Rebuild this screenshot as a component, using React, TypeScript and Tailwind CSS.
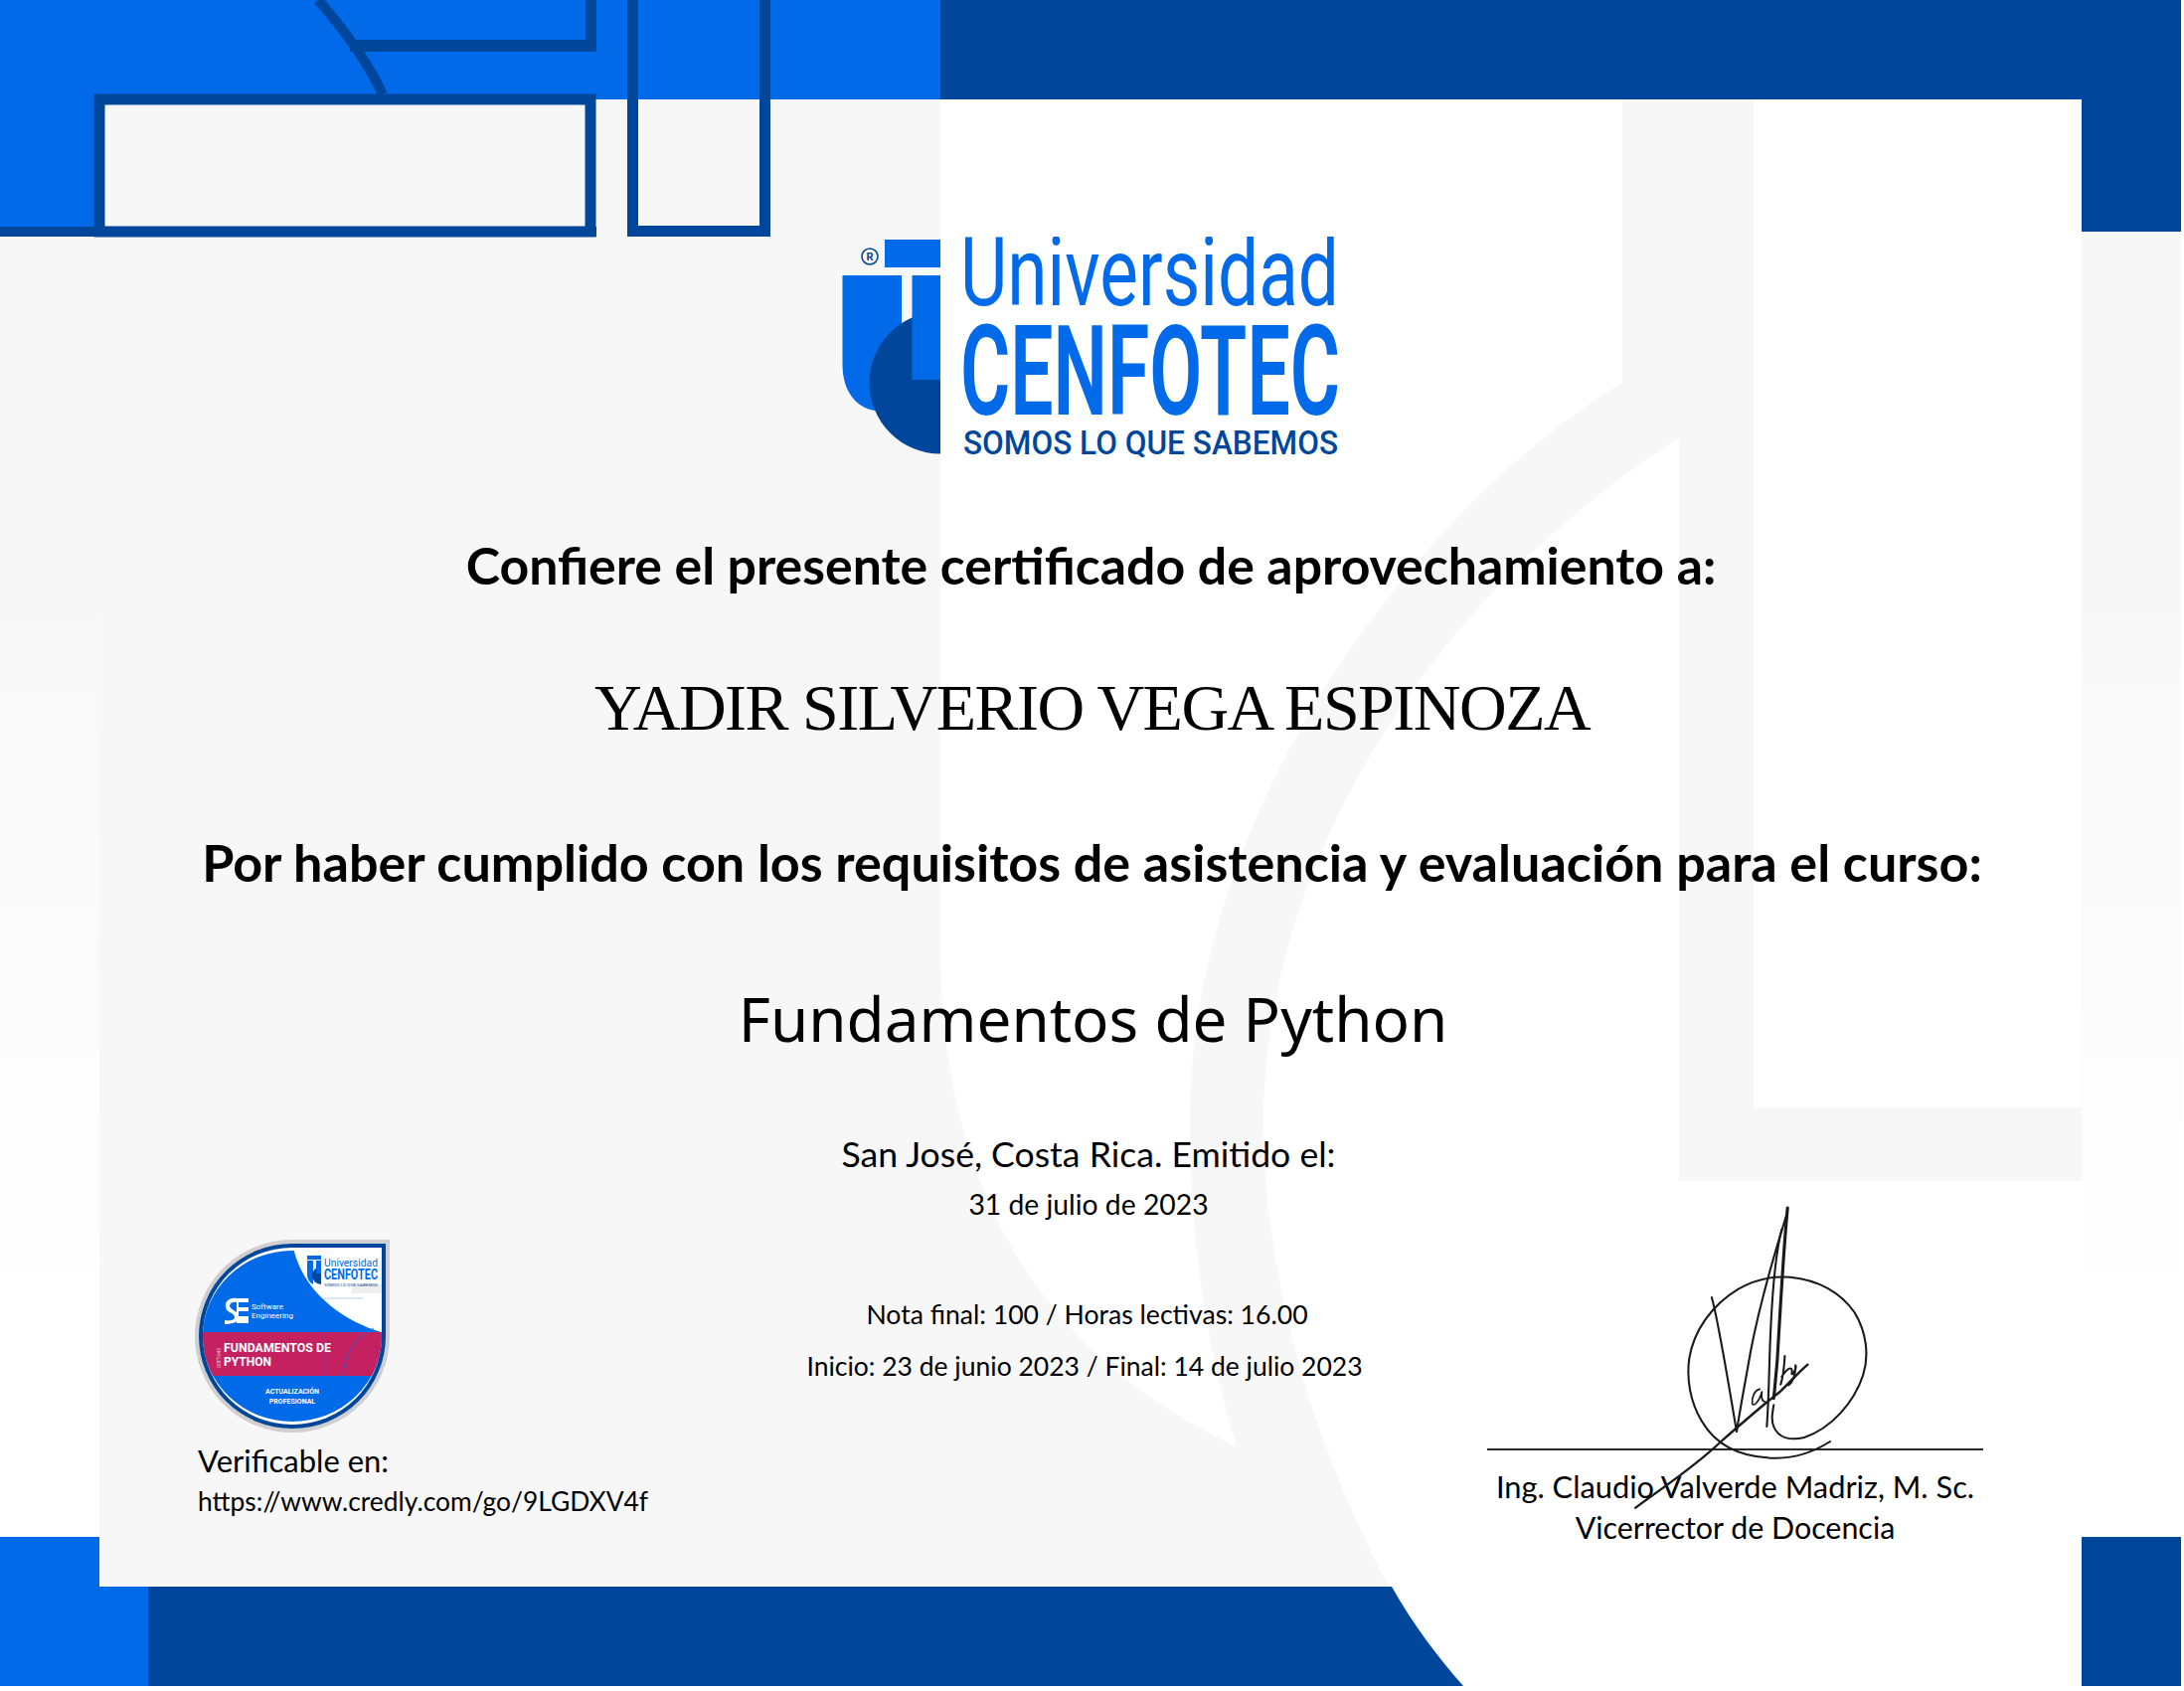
import React from 'react';

const BLUE = '#006ae9';
const DARK = '#00479b';
const PANEL = '#f7f7f7';

const Backdrop = () => (
  <svg className="absolute left-0 top-0" width="2197" height="1701" viewBox="0 0 2197 1701">
    <defs>
      <linearGradient id="margin" x1="0" y1="0" x2="0" y2="1">
        <stop offset="0" stopColor={PANEL} />
        <stop offset="0.25" stopColor={PANEL} />
        <stop offset="0.85" stopColor="#ffffff" />
      </linearGradient>
    </defs>
    <rect x="0" y="0" width="2194" height="1696" fill={PANEL} />
    <rect x="0" y="238" width="100" height="1308" fill="url(#margin)" />
    <rect x="2094" y="233" width="100" height="1313" fill="url(#margin)" />

    {/* big white shapes behind the text */}
    <path
      d="M946 100H1632V385C1440 500 1197 800 1197 1128C1197 1250 1215 1360 1244 1455C1080 1380 946 1230 946 955Z"
      fill="#ffffff"
    />
    <path
      d="M1689 441C1450 590 1271 860 1271 1128C1271 1300 1330 1470 1397 1596C1420 1635 1445 1665 1472 1696H2094V1188H1689Z"
      fill="#ffffff"
    />
    <rect x="1764" y="100" width="330" height="1014" fill="#ffffff" />

    {/* top bands */}
    <rect x="946" y="0" width="1248" height="100" fill={DARK} />
    <rect x="2094" y="0" width="100" height="233" fill={DARK} />
    <rect x="0" y="0" width="946" height="100" fill={BLUE} />
    <rect x="0" y="0" width="95" height="230" fill={BLUE} />
    <path d="M320 0Q364 50 385 95" fill="none" stroke={DARK} strokeWidth="10" />
    <rect x="589" y="0" width="11" height="52" fill={DARK} />
    <rect x="352" y="40" width="248" height="12" fill={DARK} />
    <rect x="100" y="100" width="494" height="133" fill={PANEL} stroke={DARK} strokeWidth="11" />
    <rect x="0" y="228" width="600" height="10" fill={DARK} />
    <rect x="636.5" y="-10" width="133" height="242.5" fill={BLUE} stroke={DARK} strokeWidth="11" />
    <rect x="642" y="100" width="122" height="127" fill={PANEL} />

    {/* bottom bands */}
    <rect x="0" y="1546" width="100" height="150" fill={BLUE} />
    <rect x="100" y="1596" width="49" height="100" fill={BLUE} />
    <path d="M149 1596H1400C1422 1635 1445 1665 1472 1696H149Z" fill={DARK} />
    <rect x="2094" y="1546" width="100" height="150" fill={DARK} />
  </svg>
);

const Logo = () => (
  <svg width="500" height="222" viewBox="847 238 500 222" className="ml-[-3px] shrink-0">
    <path d="M847.5 277H907V413H880C860 410 847.5 392 847.5 367Z" fill={BLUE} />
    <path d="M946 313.5A71.5 71.5 0 1 0 946 456.5Z" fill={DARK} />
    <rect x="917.5" y="277" width="28.5" height="105" fill={BLUE} />
    <rect x="890" y="241" width="56" height="28" fill={BLUE} />
    <circle cx="875" cy="258" r="8" fill="none" stroke={DARK} strokeWidth="1.6" />
    <text x="875" y="262" textAnchor="middle" fontSize="11" fontFamily="Roboto, sans-serif" fontWeight="700" fill={DARK}>
      R
    </text>
    <text x="966" y="307" fontSize="96" fontFamily="Roboto, sans-serif" fill={BLUE} textLength="381" lengthAdjust="spacingAndGlyphs">
      Universidad
    </text>
    <text x="966" y="417" fontSize="126" fontWeight="600" fontFamily="Roboto, sans-serif" fill={BLUE} textLength="382" lengthAdjust="spacingAndGlyphs">
      CENFOTEC
    </text>
    <text x="969" y="457" fontSize="33.5" fontWeight="500" fontFamily="Roboto, sans-serif" fill={DARK} textLength="377" lengthAdjust="spacingAndGlyphs">
      SOMOS LO QUE SABEMOS
    </text>
  </svg>
);

const Badge = () => (
  <svg width="197" height="196" viewBox="16 16 197 196" className="block">
    <defs>
      <clipPath id="badgeInner">
        <path d="M114 28H204V114A90 86 0 1 1 114 28Z" />
      </clipPath>
    </defs>
    <path d="M114 17H212V114A98 97 0 1 1 114 17Z" fill="#cfcfcf" />
    <path d="M114 21H208V114A94 93 0 1 1 114 21Z" fill={DARK} />
    <path d="M114 25H204V114A90 89 0 1 1 114 25Z" fill="#ffffff" />
    <path d="M114 28H204V114A90 86 0 1 1 114 28Z" fill={BLUE} />
    <g clipPath="url(#badgeInner)">
      <path d="M115 25H210V112C165 100 125 70 115 25Z" fill="#ffffff" />
      <rect x="174" y="62" width="30" height="9" fill="#efefef" />
      <rect x="20" y="110" width="190" height="44" fill="#c42160" />
      <path d="M165 154C166 132 178 116 196 106" fill="none" stroke={BLUE} strokeWidth="0.8" />
      <path d="M146 154V76H185" fill="none" stroke={BLUE} strokeWidth="0.6" opacity="0.5" />
    </g>
    <rect x="129" y="33" width="14" height="4" fill={BLUE} />
    <path d="M129 38H135V62C131 60 129 56 129 52Z" fill={BLUE} />
    <path d="M143 44A9 9 0 1 0 143 62Z" fill={DARK} />
    <rect x="138" y="38" width="5" height="13" fill={BLUE} />
    <text x="146" y="44" fontSize="11" fontFamily="Roboto, sans-serif" fill={BLUE} textLength="54" lengthAdjust="spacingAndGlyphs">Universidad</text>
    <text x="146" y="57" fontSize="14" fontWeight="700" fontFamily="Roboto, sans-serif" fill={BLUE} textLength="54" lengthAdjust="spacingAndGlyphs">CENFOTEC</text>
    <text x="146" y="64" fontSize="4.2" fontFamily="Roboto, sans-serif" fill={DARK} textLength="54" lengthAdjust="spacingAndGlyphs">SOMOS LO QUE SABEMOS</text>
    <path d="M60 76H70V80H60ZM60 85H70V89H60ZM60 94H70V101H60ZM58 76V101H60V76Z" fill="#ffffff" />
    <path d="M58 76C50 75 46 80 47 85C48 91 56 90 56 95C56 98 51 99 46 98V102C54 102 60 100 60 95C60 88 52 88 51 84C51 81 54 79 58 80Z" fill="#ffffff" />
    <text x="73" y="87" fontSize="8" fontFamily="Roboto, sans-serif" fill="#ffffff">Software</text>
    <text x="73" y="96" fontSize="8" fontFamily="Roboto, sans-serif" fill="#ffffff">Engineering</text>
    <text x="42" y="146" fontSize="5" fontFamily="Roboto, sans-serif" fill="#f3c3d5" transform="rotate(-90 42 146)" textLength="20">SOFT-645</text>
    <text x="45" y="130" fontSize="12" fontWeight="700" fontFamily="Roboto, sans-serif" fill="#ffffff" textLength="108" lengthAdjust="spacingAndGlyphs">FUNDAMENTOS DE</text>
    <text x="45" y="144" fontSize="12" fontWeight="700" fontFamily="Roboto, sans-serif" fill="#ffffff" textLength="48" lengthAdjust="spacingAndGlyphs">PYTHON</text>
    <text x="114" y="172" textAnchor="middle" fontSize="7" fontWeight="700" fontFamily="Roboto, sans-serif" fill="#ffffff">ACTUALIZACIÓN</text>
    <text x="114" y="182" textAnchor="middle" fontSize="7" fontWeight="700" fontFamily="Roboto, sans-serif" fill="#ffffff">PROFESIONAL</text>
  </svg>
);

const Signature = () => (
  <svg className="absolute left-[-19px] top-[-259px]" width="540" height="360" viewBox="0 0 1550 1080" preserveAspectRatio="none">
    <g fill="none" stroke="#1a1a1a" strokeLinecap="round" strokeLinejoin="round">
      <path
        strokeWidth="6"
        d="M1045 750C1000 780 950 800 890 800C800 800 720 770 675 690C640 630 630 560 638 500C650 420 700 340 780 290C830 260 880 250 930 254C1010 262 1075 300 1115 360C1150 420 1158 490 1140 550C1115 630 1050 710 970 738C930 748 895 740 882 705C874 685 878 665 882 640"
      />
      <path strokeWidth="6" d="M703 315C725 400 755 600 775 720" />
      <path strokeWidth="6" d="M775 720C785 650 800 570 815 480C835 370 870 230 918 70" />
      <path strokeWidth="9" d="M922 45C912 150 905 280 897 420C893 520 888 560 882 620" />
      <path strokeWidth="6" d="M905 110C885 190 875 330 870 500C868 580 866 650 862 705" />
      <path strokeWidth="7" d="M483 950C560 890 650 830 730 750C790 695 850 640 900 600C930 570 955 540 980 518" />
      <path strokeWidth="5" d="M842 592C826 594 818 620 820 636C824 646 840 630 848 600C846 615 848 628 856 630" />
      <path strokeWidth="6" d="M914 492C912 530 908 560 902 578M905 555C920 530 935 520 935 540C930 560 950 530 945 520C945 550 938 570 925 580" />
    </g>
  </svg>
);

const App = () => {
  return (
    <div className="relative h-[1701px] w-[2197px] overflow-hidden bg-white font-['Lato',sans-serif] text-black">
      <Backdrop />
      <main className="relative flex flex-col items-center pt-[238px]">
        <Logo />
        <h2 className="mt-[78px] ml-[-2px] whitespace-nowrap text-[51.8px] font-bold leading-[60px]">
          Confiere el presente certificado de aprovechamiento a:
        </h2>
        <h1 className="mt-[69px] whitespace-nowrap font-['Liberation_Serif',serif] text-[66px] leading-[90px] font-normal tracking-[-1.5px]">
          YADIR SILVERIO VEGA ESPINOZA
        </h1>
        <h2 className="mt-[80px] whitespace-nowrap text-[52.1px] font-bold leading-[60px]">
          Por haber cumplido con los requisitos de asistencia y evaluación para el curso:
        </h2>
        <h2 className="mt-[87px] ml-[2px] whitespace-nowrap font-['Noto_Sans',sans-serif] text-[62px] leading-[80px] font-normal">
          Fundamentos de Python
        </h2>

        <div className="mt-[77px] flex w-full items-start">
          <div className="w-[780px] pl-[196px] pt-[105px]">
            <Badge />
            <p className="ml-[3px] mt-[9px] text-[31px] leading-[36px]">Verificable en:</p>
            <p className="ml-[3px] mt-[7px] text-[26.4px] leading-[32px]">https://www.credly.com/go/9LGDXV4f</p>
          </div>

          <div className="flex w-[630px] flex-col items-center">
            <p className="text-[35.6px] leading-[40px]">San José, Costa Rica. Emitido el:</p>
            <p className="mt-[12px] text-[28.3px] leading-[36px]">31 de julio de 2023</p>
            <p className="mt-[75px] ml-[-3px] text-[26.6px] leading-[36px]">Nota final: 100 / Horas lectivas: 16.00</p>
            <p className="mt-[16px] ml-[-8px] text-[26.5px] leading-[36px]">Inicio: 23 de junio 2023 / Final: 14 de julio 2023</p>
          </div>

          <div className="relative ml-[86px] mt-[316px] flex w-[499px] flex-col items-center border-t-2 border-[#2a2a2a]">
            <Signature />
            <p className="mt-[19px] whitespace-nowrap text-[30.8px] leading-[36px]">Ing. Claudio Valverde Madriz, M. Sc.</p>
            <p className="mt-[4px] whitespace-nowrap text-[30.4px] leading-[36px]">Vicerrector de Docencia</p>
          </div>
        </div>
      </main>
    </div>
  );
};

export default App;
